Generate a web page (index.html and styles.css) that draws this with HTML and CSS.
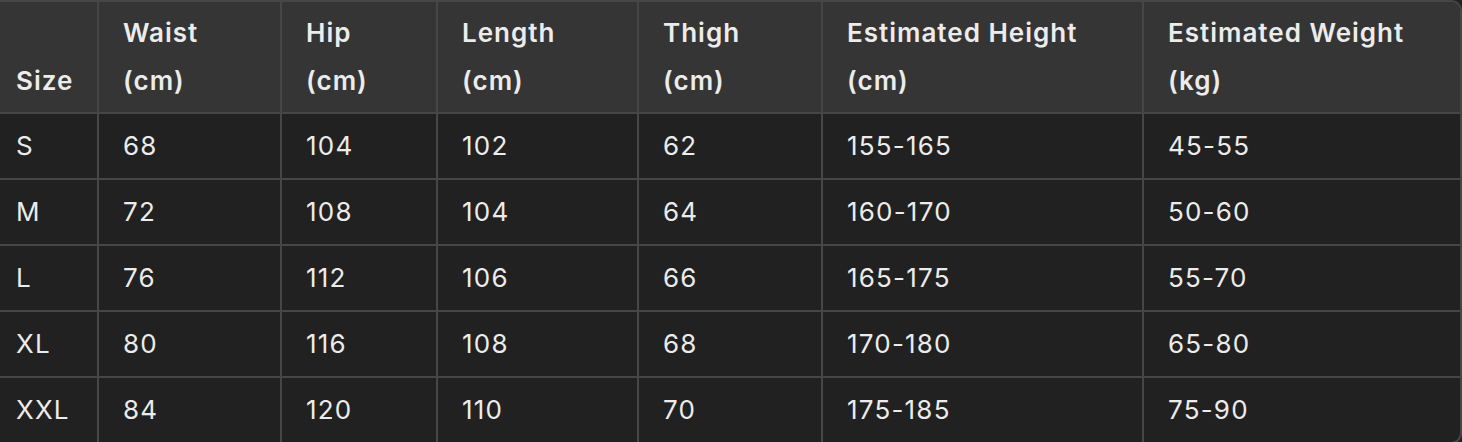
FILE: index.html
```html
<!DOCTYPE html>
<html>
<head>
<meta charset="utf-8">
<link rel="stylesheet" href="styles.css">
</head>
<body>
<div class="wrap">
<table class="sizes">
<colgroup>
<col class="c1"><col class="c2"><col class="c3"><col class="c4"><col class="c5"><col class="c6"><col class="c7">
</colgroup>
<thead>
<tr>
<th>Size</th>
<th>Waist<br>(cm)</th>
<th>Hip<br>(cm)</th>
<th>Length<br>(cm)</th>
<th>Thigh<br>(cm)</th>
<th>Estimated Height<br>(cm)</th>
<th>Estimated Weight<br>(kg)</th>
</tr>
</thead>
<tbody>
<tr><td>S</td><td>68</td><td>104</td><td>102</td><td>62</td><td>155-165</td><td>45-55</td></tr>
<tr><td>M</td><td>72</td><td>108</td><td>104</td><td>64</td><td>160-170</td><td>50-60</td></tr>
<tr><td>L</td><td>76</td><td>112</td><td>106</td><td>66</td><td>165-175</td><td>55-70</td></tr>
<tr><td>XL</td><td>80</td><td>116</td><td>108</td><td>68</td><td>170-180</td><td>65-80</td></tr>
<tr><td>XXL</td><td>84</td><td>120</td><td>110</td><td>70</td><td>175-185</td><td>75-90</td></tr>
</tbody>
</table>
</div>
</body>
</html>
```
FILE: styles.css
```css
html, body {
  margin: 0;
  padding: 0;
  background: #212121;
  overflow: hidden;
}
.wrap {
  width: 1462px;
  box-sizing: border-box;
  border-top: 2px solid #464646;
  border-right: 2px solid #464646;
  border-bottom: 2px solid #464646;
  border-top-right-radius: 11px;
  border-bottom-right-radius: 11px;
  overflow: hidden;
  background: #212121;
}
.sizes {
  width: 1460px;
  table-layout: fixed;
  border-collapse: separate;
  border-spacing: 0;
  font-family: Inter, "Liberation Sans", sans-serif;
  color: #ececec;
  font-size: 26px;
}
.c1 { width: 97px; }
.c2 { width: 183px; }
.c3 { width: 156px; }
.c4 { width: 201px; }
.c5 { width: 184px; }
.c6 { width: 321px; }
.c7 { width: 318px; }
.sizes th {
  background: #353535;
  font-weight: 600;
  letter-spacing: 1px;
  text-align: left;
  vertical-align: bottom;
  line-height: 48px;
  height: 110px;
  box-sizing: border-box;
  padding: 7px 6px 7px 24px;
  border-left: 2px solid #464646;
  white-space: nowrap;
}
.sizes td {
  font-weight: 400;
  letter-spacing: 1.2px;
  line-height: 64px;
  height: 66px;
  box-sizing: border-box;
  padding: 0 6px 0 24px;
  border-top: 2px solid #464646;
  border-left: 2px solid #464646;
  white-space: nowrap;
}
.sizes th:first-child,
.sizes td:first-child {
  border-left: none;
  padding-left: 16px;
}
```
